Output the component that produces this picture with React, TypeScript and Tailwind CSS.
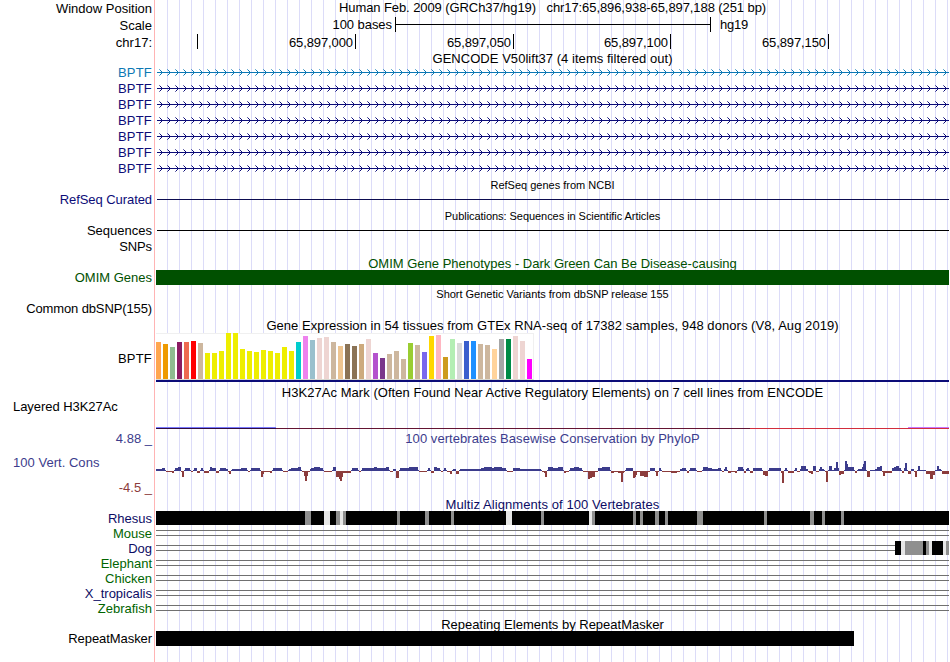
import React from 'react';
import clsx from 'clsx';

const TRACK_WIDTH = 793;

const navy = '#0c0c78';

// [height, color] per tissue
const tissues: [number, string][] = [
  [37, '#FFA54F'], [35, '#EE9A00'], [32, '#8FBC8F'], [37, '#8B1C62'], [37, '#EE6A50'], [38, '#FF0000'],
  [36, '#CDB79E'], [26, '#EEEE00'], [26, '#EEEE00'], [28, '#EEEE00'], [46, '#EEEE00'], [46, '#EEEE00'],
  [30, '#EEEE00'], [28, '#EEEE00'], [27, '#EEEE00'], [29, '#EEEE00'], [28, '#EEEE00'], [26, '#EEEE00'],
  [32, '#EEEE00'], [28, '#EEEE00'], [37, '#00CDCD'], [43, '#EE82EE'], [39, '#9AC0CD'], [41, '#EED5D2'],
  [42, '#EED5D2'], [37, '#CDB79E'], [33, '#EEC591'], [35, '#8B7355'], [33, '#8B7355'], [35, '#CDAA7D'],
  [40, '#EED5D2'], [26, '#B452CD'], [21, '#7A378B'], [25, '#CDB79E'], [28, '#CDB79E'], [20, '#CDB79E'],
  [36, '#9ACD32'], [34, '#CDB79E'], [27, '#7A67EE'], [43, '#FFD700'], [44, '#FFB6C1'], [22, '#CD9B1D'],
  [40, '#B4EEB4'], [36, '#D9D9D9'], [38, '#3A5FCD'], [38, '#1E90FF'], [35, '#CDB79E'], [34, '#CDB79E'],
  [30, '#FFD39B'], [40, '#A6A6A6'], [40, '#008B45'], [43, '#EED5D2'], [38, '#EED5D2'], [20, '#FF00FF'],
];

// [start, score]: each score holds until the next start
const phyloP: [number, number][] = [
  [0, 2], [6, 3], [9, 1], [10, -1], [16, -2], [18, 1], [19, 3], [22, 4], [25, -1], [26, -6], [28, 1], [29, 3],
  [34, 1], [35, -1], [37, 1], [38, 3], [41, -2], [44, 1], [45, 3], [47, 1], [48, -2], [53, 1], [54, 4], [56, 3],
  [60, -2], [63, 1], [64, 3], [70, 2], [72, -1], [73, -3], [75, 1], [76, 2], [85, 3], [91, 1], [92, -1], [94, 1],
  [95, 3], [104, 1], [105, -6], [107, -3], [108, -1], [114, -2], [116, 1], [117, 3], [126, 1], [127, -1],
  [132, 1], [133, 2], [135, 3], [142, 4], [145, 1], [146, -1], [148, -5], [149, -10], [151, -5], [152, -1],
  [154, 2], [155, 3], [158, 4], [164, 3], [167, 1], [168, -1], [176, 1], [177, 4], [180, -6], [183, -8],
  [184, -10], [186, -6], [187, -2], [195, 1], [196, 3], [202, 1], [203, -1], [205, 1], [206, 3], [218, 4],
  [221, 3], [230, 4], [233, 1], [234, -1], [237, 2], [240, -7], [243, 1], [244, 3], [253, 4], [262, 1],
  [263, -1], [271, 1], [272, 3], [274, 1], [275, -2], [278, 4], [281, 3], [284, 1], [285, -1], [287, 1],
  [288, 3], [290, 1], [291, -1], [294, -3], [296, 1], [297, 2], [300, -3], [303, 1], [304, 2], [325, 3],
  [328, 4], [336, 3], [338, 4], [346, 3], [350, 1], [351, -1], [357, 3], [364, 2], [385, 1], [386, -1],
  [388, -2], [389, -6], [391, 1], [392, 4], [397, 3], [402, 4], [407, 1], [408, -2], [410, -1], [413, 1],
  [414, 3], [418, 4], [423, 3], [426, 1], [427, -1], [432, -8], [434, -7], [436, -6], [439, -1], [442, 3],
  [446, 4], [454, 1], [455, -2], [458, -1], [462, -2], [465, -11], [467, -2], [468, -1], [469, 1], [470, 3],
  [477, -7], [479, -6], [480, -4], [481, -1], [484, -5], [488, -6], [492, -1], [494, 3], [499, -1], [500, -5],
  [502, -1], [503, 3], [505, 1], [506, -1], [515, -2], [521, -1], [524, 2], [526, 3], [530, 1], [531, -2],
  [533, 1], [534, 3], [540, 1], [541, -1], [546, 1], [547, 4], [552, 3], [556, 2], [562, 3], [565, 1],
  [566, -1], [568, 2], [569, 4], [571, 1], [572, -2], [575, -1], [579, -2], [581, 1], [582, 4], [587, 2],
  [588, -2], [590, 2], [591, 3], [593, 1], [594, -2], [597, 3], [606, 1], [607, -4], [609, -5], [612, 1],
  [613, 3], [625, -2], [626, -12], [628, 1], [629, 3], [631, 1], [632, -2], [638, 1], [639, 3], [641, -1],
  [644, 2], [645, 5], [650, 2], [652, -1], [653, -2], [655, -3], [657, 5], [660, -1], [663, 2], [664, 4],
  [666, 2], [668, 1], [669, -1], [670, -11], [672, 1], [673, 5], [676, 1], [678, 3], [680, 9], [682, 3],
  [683, -4], [685, -3], [688, 1], [689, 10], [691, 7], [692, 4], [698, 1], [699, -2], [701, 1], [702, 2],
  [706, 4], [707, 7], [708, 10], [710, 1], [711, -6], [714, 1], [719, 2], [721, 4], [724, 5], [726, -1],
  [727, -5], [729, -2], [736, 3], [738, 4], [740, 5], [743, 3], [745, 1], [746, -2], [748, 3], [749, 8],
  [751, 1], [752, -3], [755, 2], [758, -1], [759, -6], [761, 1], [762, 5], [764, 1], [770, -3], [774, -8],
  [777, -4], [779, 1], [781, 5], [783, 2], [785, 1], [786, -3],
];

type Block = [number, number, string];

const GRAY = '#8f8f8f';
const LIGHT = '#e6e6e6';

// [x, width, color]
const rhesus: Block[] = [
  [0, 793, '#000'], [149, 6, GRAY], [168, 6, LIGHT], [180, 4, GRAY], [184, 3, LIGHT], [187, 3, GRAY],
  [241, 3, GRAY], [269, 4, GRAY], [295, 3, GRAY], [350, 6, LIGHT], [385, 3, GRAY], [433, 3, LIGHT],
  [436, 3, GRAY], [477, 3, GRAY], [484, 3, GRAY], [499, 4, GRAY], [509, 3, GRAY], [541, 6, GRAY],
  [608, 3, GRAY], [654, 4, GRAY], [666, 3, GRAY], [685, 3, GRAY],
];

const dog: Block[] = [
  [739, 6, '#000'], [745, 4, LIGHT], [749, 18, GRAY], [767, 3, '#000'], [770, 3, GRAY], [773, 3, LIGHT],
  [776, 11, '#000'], [787, 3, LIGHT], [790, 3, GRAY],
];

const species: { name: string; blocks?: Block[]; dark?: boolean; gapEnd: number }[] = [
  { name: 'Rhesus', blocks: rhesus, dark: true, gapEnd: 0 },
  { name: 'Mouse', gapEnd: 793 },
  { name: 'Dog', blocks: dog, dark: true, gapEnd: 739 },
  { name: 'Elephant', gapEnd: 793 },
  { name: 'Chicken', gapEnd: 793 },
  { name: 'X_tropicalis', dark: true, gapEnd: 793 },
  { name: 'Zebrafish', gapEnd: 793 },
];

interface RowProps {
  label?: React.ReactNode;
  height: string;
  labelClass?: string;
  children?: React.ReactNode;
}

const Row: React.FC<RowProps> = ({ label, height, labelClass, children }) => (
  <div className={clsx('flex shrink-0', height)}>
    <div className={clsx('flex w-[152px] shrink-0 items-center justify-end whitespace-pre', labelClass)}>{label}</div>
    <div className="ml-1 w-[793px] shrink-0">{children}</div>
  </div>
);

const Title: React.FC<{ height: string; className?: string; children: React.ReactNode }> = ({
  height,
  className,
  children,
}) => (
  <Row height={height}>
    <div className={clsx('flex h-full items-center justify-center whitespace-pre', className)}>{children}</div>
  </Row>
);

const Tick: React.FC<{ width: string; children: React.ReactNode }> = ({ width, children }) => (
  <div
    className={clsx(
      'flex h-full items-center justify-end border-r border-black pt-[2px] pr-[2px] tracking-[-0.1px]',
      width,
    )}
  >
    {children}
  </div>
);

const GeneArrows: React.FC<{ color: string }> = ({ color }) => (
  <svg width={TRACK_WIDTH} height={16} className="block" fill={color} shapeRendering="crispEdges">
    <path d="M1 8h792v1H1z" />
    {Array.from({ length: 99 }, (_, i) => (
      <g key={i} transform={`translate(${i * 8 + 3} 5)`}>
        <path d="M0 0h1v1h-1zM0 6h1v1h-1z" opacity={0.6} />
        <path d="M1 1h1v1h-1zM1 5h1v1h-1zM2 2h1v3h-1zM3 3h1v1h-1z" />
      </g>
    ))}
  </svg>
);

const Expression: React.FC = () => (
  <div className="h-[49px] border-b-2 border-[#0c0c78]">
    <div className="flex h-[47px] w-[378px] items-end gap-[2px] border-r border-b border-t border-[#f0f0f0] border-b-[#d8d8d0] bg-white">
      {tissues.map(([height, color], i) => (
        <div key={i} className="w-[5px] shrink-0" style={{ height, backgroundColor: color }} />
      ))}
    </div>
  </div>
);

const Conservation: React.FC = () => (
  <svg width={TRACK_WIDTH} height={52} className="block" shapeRendering="crispEdges">
    {phyloP.map(([x, score], i) => {
      const end = i + 1 < phyloP.length ? phyloP[i + 1][0] : TRACK_WIDTH;
      return (
        <rect
          key={x}
          x={x}
          y={score > 0 ? 25 - score : 25}
          width={end - x}
          height={Math.abs(score)}
          fill={score > 0 ? '#3c3c8c' : '#8c3c3c'}
        />
      );
    })}
  </svg>
);

const Alignment: React.FC<{ blocks?: Block[]; gapEnd: number }> = ({ blocks = [], gapEnd }) => (
  <svg width={TRACK_WIDTH} height={15} className="block" shapeRendering="crispEdges">
    {gapEnd > 0 && <path d={`M0 4.5H${gapEnd}M0 9.5H${gapEnd}`} stroke="#707070" />}
    {blocks.map(([x, width, color]) => (
      <rect key={x} x={x} y={0} width={width} height={14} fill={color} />
    ))}
  </svg>
);

const App: React.FC = () => (
  <div className="h-[662px] w-[950px] overflow-hidden bg-white font-['Liberation_Sans',Arial,sans-serif] text-[13px] leading-none text-black">
    <div className="flex h-full w-[949px] flex-col bg-[linear-gradient(to_right,#fff_154px,#ffb4b4_154px,#ffb4b4_155px,#fff_155px,#fff_156px,transparent_156px),repeating-linear-gradient(to_right,#fff_0,#fff_11px,#dcdcf8_11px,#dcdcf8_12px)]">
      {/* Position and ruler */}
      <Row label="Window Position" height="h-[17px]">
        <div className="flex h-[15px] items-center justify-center whitespace-pre tracking-[-0.085px]">
          {'Human Feb. 2009 (GRCh37/hg19)   chr17:65,896,938-65,897,188 (251 bp)'}
        </div>
      </Row>
      <Row label="Scale" height="h-[17px]">
        <div className="flex h-[15px] items-center">
          <span className="w-[236px] text-right tracking-[-0.05px]">100 bases</span>
          <div className="ml-[3px] flex h-full w-[316px] items-center border-x border-black">
            <div className="h-px w-full bg-black" />
          </div>
          <span className="ml-[9px] tracking-[-0.2px]">hg19</span>
        </div>
      </Row>
      <Row label="chr17:" height="h-[17px]">
        <div className="flex h-[15px] items-center">
          <div className="h-full w-[42px] border-r border-black" />
          <Tick width="w-[158px]">65,897,000</Tick>
          <Tick width="w-[158px]">65,897,050</Tick>
          <Tick width="w-[157px]">65,897,100</Tick>
          <Tick width="w-[158px]">65,897,150</Tick>
        </div>
      </Row>

      {/* Genes */}
      <Title height="h-[13px]" className="pt-[2px] tracking-[0.04px]">GENCODE V50lift37 (4 items filtered out)</Title>
      <Row label="BPTF" height="h-4" labelClass="text-[#0c78b4] tracking-[0.2px]">
        <GeneArrows color="#0c78b4" />
      </Row>
      {Array.from({ length: 6 }, (_, i) => (
        <Row key={i} label="BPTF" height="h-4" labelClass="text-[#0c0c78] tracking-[0.2px]">
          <GeneArrows color={navy} />
        </Row>
      ))}
      <Title height="h-[15px]" className="pt-[3px] text-[11px]">RefSeq genes from NCBI</Title>
      <Row label="RefSeq Curated" height="h-4" labelClass="text-[#0c0c78] tracking-[-0.07px]">
        <div className="ml-px h-[9px] border-b border-[#0c0c50]" />
      </Row>
      <Title height="h-[15px]" className="pt-[3px] text-[11px] tracking-[-0.05px]">Publications: Sequences in Scientific Articles</Title>
      <Row label="Sequences" height="h-4">
        <div className="ml-px h-[9px] border-b border-black" />
      </Row>
      <Row label="SNPs" height="h-4" labelClass="tracking-[-0.1px]" />

      {/* Variants */}
      <Title height="h-4" className="pt-[3px] text-[#005000]">OMIM Gene Phenotypes - Dark Green Can Be Disease-causing</Title>
      <Row label="OMIM Genes" height="h-[15px]" labelClass="text-[#005000]">
        <div className="h-full bg-[#005000]" />
      </Row>
      <Title height="h-4" className="pt-[3px] text-[11px] tracking-[-0.02px]">Short Genetic Variants from dbSNP release 155</Title>
      <Row label="Common dbSNP(155)" height="h-4" labelClass="pb-[2px] tracking-[-0.12px]" />

      {/* Expression and regulation */}
      <Title height="h-4" className="tracking-[0.055px]">
        Gene Expression in 54 tissues from GTEx RNA-seq of 17382 samples, 948 donors (V8, Aug 2019)
      </Title>
      <Row label="BPTF" height="h-[49px]" labelClass="pt-[2px] tracking-[0.2px]">
        <Expression />
      </Row>
      <Title height="h-[18px]" className="pt-[3px] tracking-[0.045px]">
        H3K27Ac Mark (Often Found Near Active Regulatory Elements) on 7 cell lines from ENCODE
      </Title>
      <Row label="Layered H3K27Ac" height="h-[30px]" labelClass="h-[12px] justify-start! pl-[13px] tracking-[-0.05px]">
        <div className="flex h-[29px] items-end">
          <div className="h-[2px] w-[120px] border-b border-[#300c40] bg-[#7878ff]" />
          <div className="h-px w-[474px] bg-[#641432]" />
          <div className="h-px w-[158px] bg-[#d22d3c]" />
          <div className="h-[2px] flex-1 border-b border-[#d22d3c] bg-[#c878ff]" />
        </div>
      </Row>

      {/* Conservation */}
      <Row label="4.88 _" height="h-4" labelClass="text-[#3c3c8c]">
        <div className="flex h-full items-center justify-center pt-px tracking-[0.05px] text-[#3c3c8c]">
          100 vertebrates Basewise Conservation by PhyloP
        </div>
      </Row>
      <Row
        height="h-[52px]"
        labelClass="flex-col items-stretch! justify-between! pt-[10px] pb-[4px]"
        label={
          <>
            <span className="pl-[13px] tracking-[0.03px] text-[#3c3c8c]">100 Vert. Cons</span>
            <span className="text-right text-[#8c3c3c]">-4.5 _</span>
          </>
        }
      >
        <Conservation />
      </Row>
      <Title height="h-[13px]" className="tracking-[0.08px] text-[#0c0c64]">Multiz Alignments of 100 Vertebrates</Title>
      {species.map(({ name, blocks, dark, gapEnd }) => (
        <Row key={name} label={name} height="h-[15px]" labelClass={dark ? 'text-[#0c0c64]' : 'text-[#006400]'}>
          <Alignment blocks={blocks} gapEnd={gapEnd} />
        </Row>
      ))}

      {/* Repeats */}
      <Title height="h-[15px]" className="pt-[2px]">Repeating Elements by RepeatMasker</Title>
      <Row label="RepeatMasker" height="h-[15px]" labelClass="tracking-[-0.07px]">
        <div className="h-full w-[698px] bg-black" />
      </Row>
    </div>
  </div>
);

export default App;
